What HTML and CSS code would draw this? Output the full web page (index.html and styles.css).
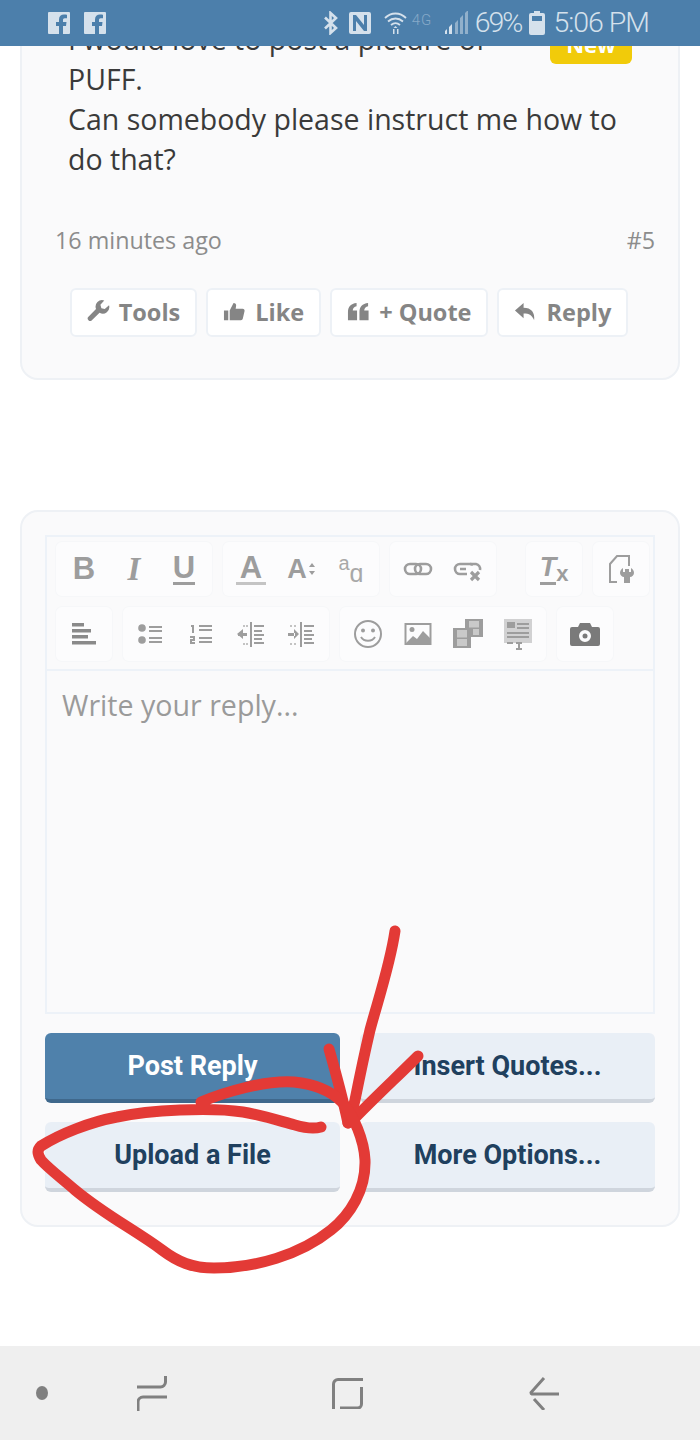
FILE: index.html
```html
<!DOCTYPE html>
<html lang="en">
<head>
    <meta charset="UTF-8">
    <meta name="viewport" content="width=device-width, initial-scale=1.0">
    <title>Write your reply</title>
    <link rel="stylesheet" href="styles.css">
</head>
<body>
    <div class="screen">
        <!-- status bar -->
        <div class="status-bar">
            <div class="status-left">
                <svg class="fb-icon" viewBox="0 0 22 22"><path d="M1 0h20a1 1 0 0 1 1 1v20a1 1 0 0 1-1 1h-6v-8h3l.5-4H15V8c0-1.100.5-1.800 1.800-1.800H19V2.700c-.5 0-1.800-.2-3-.2-3 0-5 1.800-5 5V10H8v4h3v8H1a1 1 0 0 1-1-1V1a1 1 0 0 1 1-1z"/></svg>
                <svg class="fb-icon" viewBox="0 0 22 22"><path d="M1 0h20a1 1 0 0 1 1 1v20a1 1 0 0 1-1 1h-6v-8h3l.5-4H15V8c0-1.100.5-1.800 1.800-1.800H19V2.700c-.5 0-1.800-.2-3-.2-3 0-5 1.800-5 5V10H8v4h3v8H1a1 1 0 0 1-1-1V1a1 1 0 0 1 1-1z"/></svg>
            </div>
            <div class="status-right">
                <svg class="st-bt" viewBox="0 0 15 24"><path d="M2 6.500l11 10.500-5.500 5V2L13 7 2 17.500" fill="none" stroke="currentColor" stroke-width="2.600"/></svg>
                <svg class="st-nfc" viewBox="0 0 22 22"><path fill-rule="evenodd" d="M2 0h18a2 2 0 0 1 2 2v18a2 2 0 0 1-2 2H2a2 2 0 0 1-2-2V2a2 2 0 0 1 2-2zM4 3v16h3V9l8 10h3V3h-3v10L7 3z"/></svg>
                <svg class="st-wifi" viewBox="0 0 23 24"><path d="M1 7c6-6 15-6 21 0M4 10.500c4.500-4 10.500-4 15 0M7 14c3-2.500 6-2.500 9 0" fill="none" stroke="currentColor" stroke-width="1.800"/><path d="M11.500 15l2 2h-4zM9 18h1.500v5H9zM13 18h1.500v5H13z"/></svg>
                <span class="st-net">4G</span>
                <svg class="st-signal" viewBox="0 0 23 24"><path class="dim" d="M10 23V12l3-3v14zM15 23V7l3-3v19zM20 23V2l3-3v24z"/><path d="M0 23v-3l2-2v5zM4 23v-7l3-3v10z"/></svg>
                <span class="st-text st-pct">69%</span>
                <svg class="st-batt" viewBox="0 0 16 24"><path fill-rule="evenodd" d="M5 0h6v2h3a2 2 0 0 1 2 2v18a2 2 0 0 1-2 2H2a2 2 0 0 1-2-2V4a2 2 0 0 1 2-2h3zM3 5v5h10V5z"/></svg>
                <span class="st-text">5:06 PM</span>
            </div>
        </div>

        <div class="page">
            <!-- post -->
            <div class="card post">
                <span class="badge-new">New</span>
                <p class="post-text">I would love to post a picture of<br>PUFF.<br>Can somebody please instruct me how to<br>do that?</p>
                <div class="post-meta">
                    <span>16 minutes ago</span>
                    <span>#5</span>
                </div>
                <div class="post-actions">
                    <a class="action-btn">
                        <svg viewBox="0 0 24 24"><path d="M23 5.500l-4.500 4-3.500-1-1-3.500 4-4.500a6.800 6.800 0 0 0-8.600 8.800L1.500 17.500a2.500 2.500 0 0 0 3.600 3.600l8-7.800A6.800 6.800 0 0 0 23 5.500z"/></svg>
                        Tools
                    </a>
                    <a class="action-btn">
                        <svg viewBox="0 0 24 24"><path d="M1 11h4.500v10H1zM7 11l4-8c1.800 0 3 1.200 2.700 3l-.5 3H20.500c1.400 0 2.300 1.200 2 2.400l-1.800 7.800c-.3 1-1 1.800-2 1.800H7z"/></svg>
                        Like
                    </a>
                    <a class="action-btn">
                        <svg viewBox="0 0 24 24"><path d="M1 12.500C1 7 4 3.500 10 3v3.500C7.500 7 6 8.500 6 11h4.500v10H1zM13 12.500C13 7 16 3.500 22 3v3.500C19.500 7 18 8.500 18 11h4.500v10H13z"/></svg>
                        + Quote
                    </a>
                    <a class="action-btn">
                        <svg viewBox="0 0 24 24"><path d="M10 3L1 11l9 8v-5c6 0 9 2 11 7 1-8-3-13-11-13z"/></svg>
                        Reply
                    </a>
                </div>
            </div>

            <!-- reply editor -->
            <div class="card reply">
                <div class="editor">
                    <div class="toolbar">
                        <div class="tb-row">
                            <div class="tb-group">
                                <span class="tb-btn tb-letter">B</span>
                                <span class="tb-btn tb-letter tb-italic">I</span>
                                <span class="tb-btn tb-letter"><span class="tb-under">U</span></span>
                            </div>
                            <div class="tb-group">
                                <span class="tb-btn tb-letter"><span class="tb-color">A</span></span>
                                <span class="tb-btn tb-letter tb-size">A<svg viewBox="0 0 6 12"><path d="M3 0l3 4H0zM3 12L0 8h6z"/></svg></span>
                                <span class="tb-btn tb-case"><span class="tb-case-top">a</span><sub>ɑ</sub></span>
                            </div>
                            <div class="tb-group">
                                <span class="tb-btn"><svg viewBox="0 0 32 32"><g fill="none" stroke="currentColor" stroke-width="2.600"><rect x="3" y="11" width="16" height="10" rx="5"/><rect x="13" y="11" width="16" height="10" rx="5"/></g></svg></span>
                                <span class="tb-btn"><svg viewBox="0 0 32 32"><g fill="none" stroke="currentColor" stroke-width="2.600"><path d="M15 21H8a5 5 0 0 1 0-10h10a5 5 0 0 1 3 1"/><path d="M14 16H8M18 11h6a5 5 0 0 1 4 6"/></g><path d="M19 19l8 8M27 19l-8 8" stroke="currentColor" stroke-width="3.200" fill="none"/></svg></span>
                            </div>
                            <div class="tb-group tb-group-far">
                                <span class="tb-btn tb-letter tb-clear"><span class="tb-under">T</span><sub>x</sub></span>
                            </div>
                            <div class="tb-group">
                                <span class="tb-btn"><svg viewBox="0 0 32 32"><path d="M12 29H5V11l7-8h12v10" fill="none" stroke="currentColor" stroke-width="2"/><path d="M18 15v4h2v-3h4v3h2v-4c2 1 3 3 3 5 0 2-2 4-4 4v6h-6v-6c-2 0-4-2-4-4 0-2 1-4 3-5z"/></svg></span>
                            </div>
                        </div>
                        <div class="tb-row">
                            <div class="tb-group">
                                <span class="tb-btn tb-mid"><svg viewBox="0 0 32 32"><path d="M4 5h12v3.500H4zM4 11h19v3.500H4zM4 17h16v3.500H4zM4 23h24v3.500H4z"/></svg></span>
                            </div>
                            <div class="tb-group">
                                <span class="tb-btn"><svg viewBox="0 0 32 32"><circle cx="7" cy="10" r="3.800"/><circle cx="7" cy="22" r="3.800"/><path d="M14 8h13v2H14zM14 12h13v2H14zM14 19h13v2H14zM14 23h13v2H14z"/></svg></span>
                                <span class="tb-btn"><svg viewBox="0 0 32 32"><path d="M14 7h13v2H14zM14 11h13v2H14zM14 19h13v2H14zM14 23h13v2H14z"/><path d="M6 7h3v8H7V9H6zM5 18h5v5H7v1h3v2H5v-5h3v-1H5z"/></svg></span>
                                <span class="tb-btn"><svg viewBox="0 0 32 32"><path d="M15 4h2v25h-2zM19 7h10v2H19zM19 12h8v2H19zM19 16h10v2H19zM19 20h8v2H19zM19 24h10v2H19z"/><path d="M3 15h9v3H3zM8 11v10L2 16z"/><path d="M8 7h2v2H8zM11 7h2v2h-2zM8 25h2v2H8zM11 25h2v2h-2z" opacity=".6"/></svg></span>
                                <span class="tb-btn"><svg viewBox="0 0 32 32"><path d="M15 4h2v25h-2zM19 7h10v2H19zM19 12h8v2H19zM19 16h10v2H19zM19 20h8v2H19zM19 24h10v2H19z"/><path d="M3 15h7v3H3zM9 11v10l5-5z"/><path d="M5 7h2v2H5zM9 7h2v2H9zM5 25h2v2H5zM9 25h2v2H9z" opacity=".6"/></svg></span>
                            </div>
                            <div class="tb-group">
                                <span class="tb-btn"><svg viewBox="0 0 32 32"><circle cx="16" cy="16" r="13" fill="none" stroke="currentColor" stroke-width="2"/><circle cx="11" cy="12.500" r="2"/><circle cx="21" cy="12.500" r="2"/><path d="M9 19c3 5 11 5 14 0" fill="none" stroke="currentColor" stroke-width="2"/></svg></span>
                                <span class="tb-btn"><svg viewBox="0 0 32 32"><rect x="3.500" y="6" width="25" height="20" fill="none" stroke="currentColor" stroke-width="2"/><circle cx="10" cy="11.500" r="2.500"/><path d="M4 25l7-7 4 3 6-8 7 7v5z"/></svg></span>
                                <span class="tb-btn"><svg viewBox="0 0 32 32"><path d="M13 1h18v18H19v-8h-6z"/><path d="M1 10h18v20H1z"/><path class="tb-frame" d="M5 12h10v7.500H5zM5 21h10v7H5zM17 3h10v6.500H17zM21 11h6v6h-6z"/></svg></span>
                                <span class="tb-btn"><svg viewBox="0 0 32 32"><path opacity=".45" d="M2 1h28v24H2z"/><path d="M5 4h8v6H5zM15 5h12v2H15zM15 9h12v2H15zM5 14h22v2H5zM5 18h22v2H5zM5 24h6v2H5zM14 24h6v2h-2v4h2v2h-6v-2h2v-4h-2z"/></svg></span>
                            </div>
                            <div class="tb-group">
                                <span class="tb-btn tb-dark"><svg viewBox="0 0 32 32"><path fill-rule="evenodd" d="M11 5h10l2 4h6a2 2 0 0 1 2 2v15a2 2 0 0 1-2 2H3a2 2 0 0 1-2-2V11a2 2 0 0 1 2-2h6zM16 12a6 6 0 1 0 0 12 6 6 0 0 0 0-12z"/><circle cx="16" cy="18" r="2.500"/></svg></span>
                            </div>
                        </div>
                    </div>
                    <div class="editor-body">Write your reply...</div>
                </div>
                <div class="form-buttons">
                    <button class="form-btn primary">Post Reply</button>
                    <button class="form-btn">Insert Quotes...</button>
                    <button class="form-btn">Upload a File</button>
                    <button class="form-btn">More Options...</button>
                </div>
            </div>
        </div>

        <!-- android nav bar -->
        <div class="nav-bar">
            <span class="nav-dot"></span>
            <svg class="nav-recents" viewBox="0 0 30 35"><path d="M28.500 0v6a5 5 0 0 1-5 5H0M30 21H6a5 5 0 0 0-5 5v9" fill="none" stroke="currentColor" stroke-width="3"/></svg>
            <svg class="nav-home" viewBox="0 0 31 31"><path d="M31 1.500H6a4.500 4.500 0 0 0-4.500 4.500V31M29.500 9v17a4 4 0 0 1-4 4H8" fill="none" stroke="currentColor" stroke-width="3"/></svg>
            <svg class="nav-back" viewBox="0 0 30 33"><path d="M15 1L2 15.500a1.500 1.500 0 0 0 1 1.500H30M5 22l10 11" fill="none" stroke="currentColor" stroke-width="3"/></svg>
        </div>

        <!-- red marker scribble on top of the screenshot -->
        <svg class="scribble" viewBox="0 0 700 1440">
            <g fill="none" stroke="#e33a36" stroke-width="11" stroke-linecap="round" stroke-linejoin="round">
                <path d="M395 931C390 965 378 1000 370 1030C363 1060 358 1085 355 1100C353 1110 350 1118 348 1123"/>
                <path d="M329 1049C335 1070 342 1095 348 1123"/>
                <path d="M418 1056C398 1076 372 1100 352 1121"/>
                <path d="M201 1102C225 1092 265 1080 294 1082C315 1084 332 1092 342 1102C354 1116 364 1140 365 1160C366 1190 350 1215 331 1230C300 1255 255 1268 214 1268C192 1268 178 1262 162 1250C135 1230 105 1215 75 1190C60 1177 48 1168 41 1160C37 1153 37 1150 41 1146C60 1134 90 1122 117 1117C150 1110 210 1107 243 1112C262 1115 280 1121 295 1125C305 1128 314 1129 321 1127"/>
            </g>
        </svg>
    </div>
</body>
</html>
```
FILE: styles.css
```css
body {
    margin: 0;
    background: #fff;
    font-family: 'Open Sans', 'Liberation Sans', sans-serif;
}
.screen {
    position: relative;
    width: 700px;
    height: 1440px;
    display: flex;
    flex-direction: column;
    overflow: hidden;
}

/* status bar */
.status-bar {
    height: 46px;
    flex: none;
    background: #4c7fab;
    color: #d5e1ec;
    display: flex;
    justify-content: space-between;
    align-items: center;
    padding: 0 51px 0 48px;
    position: relative;
    z-index: 2;
}
.status-bar svg {
    fill: currentColor;
    display: block;
}
.status-left {
    display: flex;
    gap: 14px;
}
.fb-icon {
    width: 22px;
    height: 22px;
}
.status-right {
    display: flex;
    align-items: center;
}
.st-bt { width: 15px; height: 24px; margin-right: 11px; }
.st-nfc { width: 22px; height: 22px; margin-right: 13px; }
.st-wifi { width: 23px; height: 24px; margin-right: 5px; }
.st-net {
    width: 27px;
    font-size: 15px;
    line-height: 16px;
    letter-spacing: 1px;
    font-family: 'Roboto', sans-serif;
    font-weight: 300;
    color: #86a9c8;
    margin-top: -7px;
}
.st-signal { width: 23px; height: 24px; margin: 0 7px 0 6px; }
.st-signal .dim { opacity: .5; }
.st-batt { width: 16px; height: 24px; margin: 0 8px; }
.st-text {
    font-family: 'Roboto', sans-serif;
    font-size: 28.500px;
    line-height: 30px;
    font-weight: 300;
    letter-spacing: -1px;
    white-space: nowrap;
}
.st-pct {
    letter-spacing: -2px;
}

/* page */
.page {
    flex: 1;
    min-height: 0;
    overflow: hidden;
}
.card {
    margin: 0 20px;
    background: #fafafb;
    border: 2px solid #eef1f5;
    border-radius: 18px;
}
.post {
    position: relative;
    margin-top: -60px;
    padding: 31px 23px 41px 33px;
}
.badge-new {
    position: absolute;
    top: 41px;
    right: 46px;
    width: 82px;
    height: 35px;
    box-sizing: border-box;
    background: #f1cb0a;
    color: #fff;
    border-radius: 6px;
    font-weight: 700;
    font-size: 22px;
    line-height: 30px;
    text-align: center;
}
.post-text {
    margin: 0 0 0 13px;
    color: #3a3a3a;
    font-size: 28.500px;
    line-height: 40px;
}
.post-meta {
    display: flex;
    justify-content: space-between;
    margin-top: 44px;
    color: #8c8c8c;
    font-size: 23.300px;
    line-height: 34px;
}
.post-actions {
    display: flex;
    justify-content: center;
    gap: 9px;
    margin-top: 31px;
    margin-left: -12px;
}
.action-btn {
    display: flex;
    align-items: center;
    justify-content: center;
    gap: 9px;
    box-sizing: border-box;
    height: 49px;
    padding: 0 15px 2px;
    background: #fff;
    border: 2px solid #edf1f6;
    border-radius: 6px;
    color: #858585;
    font-size: 23.500px;
    font-weight: 700;
    white-space: nowrap;
}
.action-btn svg {
    width: 23px;
    height: 23px;
    fill: currentColor;
}

/* reply box */
.reply {
    margin-top: 130px;
    padding: 23px 23px 33px;
}
.editor {
    border: 2px solid #edf2f8;
}
.toolbar {
    display: flex;
    flex-direction: column;
    gap: 11px;
    padding: 5px 0 6px 9px;
    height: 121px;
    border-bottom: 2px solid #edf2f8;
}
.tb-row {
    display: flex;
    gap: 11px;
}
.tb-group {
    display: flex;
    padding: 0 3px;
    border-radius: 6px;
    background: #fcfcfd;
    box-shadow: 0 0 0 1px #f6f7f9;
}
.tb-group-far {
    margin-left: 19px;
}
.tb-btn {
    width: 50px;
    height: 54px;
    display: flex;
    align-items: center;
    justify-content: center;
    color: #9d9d9d;
}
.tb-btn svg {
    width: 32px;
    height: 32px;
    fill: currentColor;
}
.tb-mid {
    color: #8a8a8a;
}
.tb-dark {
    color: #7a7a7a;
}
.tb-frame {
    fill: #c9c9c9;
}
.tb-letter {
    font-family: 'Liberation Sans', sans-serif;
    font-size: 31px;
    font-weight: 700;
}
.tb-italic {
    font-family: 'Liberation Serif', serif;
    font-style: italic;
    font-size: 33px;
}
.tb-under {
    border-bottom: 3px solid currentColor;
    line-height: 29px;
}
.tb-color {
    border-bottom: 3px solid #c4c4c4;
    line-height: 29px;
    padding: 0 4px;
}
.tb-size {
    font-size: 27px;
}
.tb-size svg {
    width: 6px;
    height: 12px;
    margin-left: 2px;
}
.tb-case {
    font-family: 'Liberation Sans', sans-serif;
    font-size: 20px;
    color: #a8a8a8;
}
.tb-case-top {
    margin-top: -12px;
}
.tb-case sub {
    font-size: 25px;
    line-height: 20px;
    vertical-align: -6px;
    margin-top: 8px;
}
.tb-clear {
    font-style: italic;
    font-size: 27px;
}
.tb-clear sub {
    font-style: normal;
    font-size: 22px;
    vertical-align: -8px;
    margin-top: 10px;
}
.editor-body {
    height: 341px;
    box-sizing: border-box;
    padding: 14px 15px;
    color: #9a9a9a;
    font-size: 28.600px;
    line-height: 40px;
}
.form-buttons {
    display: grid;
    grid-template-columns: 295px 295px;
    justify-content: space-between;
    gap: 19px 20px;
    margin-top: 19px;
}
.form-btn {
    height: 70px;
    padding: 0;
    border: none;
    border-bottom: 4px solid #cfd5dd;
    border-radius: 6px;
    background: #e9eff6;
    color: #20405e;
    font-family: 'Roboto', sans-serif;
    font-size: 27px;
    font-weight: 700;
}
.form-btn.primary {
    background: #4f81ab;
    border-bottom-color: #3f688c;
    color: #fff;
}

/* nav bar */
.nav-bar {
    height: 94px;
    flex: none;
    background: #efefef;
    color: #808080;
    display: flex;
    align-items: center;
    padding-left: 36px;
}
.nav-dot {
    width: 12px;
    height: 14px;
    background: currentColor;
    border-radius: 50%;
}
.nav-recents {
    width: 30px;
    height: 35px;
    margin-left: 89px;
}
.nav-home {
    width: 31px;
    height: 31px;
    margin-left: 165px;
}
.nav-back {
    width: 30px;
    height: 33px;
    margin-left: 166px;
}

/* drawn on top of the screenshot */
.scribble {
    position: absolute;
    inset: 0;
    width: 700px;
    height: 1440px;
    z-index: 3;
    pointer-events: none;
}
```
